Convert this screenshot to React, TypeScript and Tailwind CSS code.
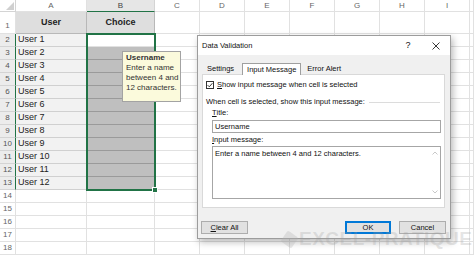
const colLetters = ["A", "B", "C", "D", "E", "F", "G", "H", "I", ""];
const rowNums = Array.from({ length: 17 }, (_, i) => i + 2);

const Corner = () => (
  <div className="bg-white border-r border-b border-[#d4d4d4] relative">
    <svg className="absolute right-[1px] bottom-[1px]" width="8" height="8" viewBox="0 0 8 8">
      <polygon points="8,0 8,8 0,8" fill="#d0d0d0" />
    </svg>
  </div>
);

const App = () => {
  return (
    <div className="relative w-[474px] h-[256px] overflow-hidden bg-white font-['Liberation_Sans',Arial,sans-serif] text-[#1f1f1f]">
      {/* sheet grid */}
      <div className="grid grid-cols-[16px_71px_68px_45px_45px_45px_45px_45px_45px_45px_4px] grid-rows-[12px_22px_repeat(17,13px)] w-max">
        <Corner />
        {colLetters.map((c, i) => (
          <div
            key={`col${i}`}
            className={
              c === "B"
                ? "bg-[#e6e6e6] border-r border-r-[#d4d4d4] border-b border-b-[#217346] flex items-center justify-center text-[8px] text-[#444]"
                : "bg-white border-r border-b border-[#e1e1e1] flex items-center justify-center text-[8px] text-[#666]"
            }
          >
            {c}
          </div>
        ))}

        {/* row 1 */}
        <div className="bg-white border-r border-b border-[#e1e1e1] flex items-end justify-center pb-[1px] text-[8px] text-[#666]">
          1
        </div>
        <div className="bg-[#dedede] border-r border-b border-[#b8b8b8] flex items-center justify-center text-[9px] font-bold text-[#222]">
          User
        </div>
        <div className="bg-[#dedede] border-r border-b border-[#b8b8b8] flex items-center justify-center text-[9px] font-bold text-[#222]">
          Choice
        </div>
        {colLetters.slice(2).map((c, i) => (
          <div key={`r1${i}`} className="border-r border-b border-[#e1e1e1]" />
        ))}

        {rowNums.map((n) => {
          const inData = n <= 13;
          return [
            <div
              key={`h${n}`}
              className={
                inData
                  ? "bg-[#ececec] border-b border-b-[#d4d4d4] border-r border-r-[#217346] flex items-center justify-center text-[8px] text-[#555]"
                  : "bg-white border-r border-b border-[#e1e1e1] flex items-center justify-center text-[8px] text-[#666]"
              }
            >
              {n}
            </div>,
            <div
              key={`a${n}`}
              className={
                inData
                  ? "bg-[#f2f2f2] border-r border-b border-[#d0d0d0] flex items-center pl-[2px] text-[9px] text-[#222]"
                  : "border-r border-b border-[#e1e1e1]"
              }
            >
              {inData ? `User ${n - 1}` : ""}
            </div>,
            <div
              key={`b${n}`}
              className={
                n === 2
                  ? "bg-white border-r border-b border-[#e1e1e1]"
                  : inData
                  ? "bg-[#bfbfbf] border-r border-b border-[#9a9a9a]"
                  : "border-r border-b border-[#e1e1e1]"
              }
            />,
            ...colLetters.slice(2).map((c, i) => (
              <div key={`${n}-${i}`} className="border-r border-b border-[#e1e1e1]" />
            )),
          ];
        })}
      </div>

      {/* selection outline */}
      <div className="absolute left-[86px] top-[33px] w-[70px] h-[158px] border-2 border-[#217346] pointer-events-none" />
      <div className="absolute left-[152px] top-[187px] w-[6px] h-[6px] bg-[#217346] border border-white" />

      {/* input message tooltip */}
      <div className="absolute left-[122px] top-[51px] w-[59px] h-[51px] bg-[#fbfadc] border border-[#a3a3a3] pl-[3px] pt-[1px] text-[8px] leading-[10px] text-[#333]">
        <div className="font-bold">Username</div>
        <div>Enter a name</div>
        <div>between 4 and</div>
        <div>12 characters.</div>
      </div>

      {/* dialog */}
      <div className="absolute left-[197px] top-[35px] w-[254px] h-[204px] bg-[#f0f0f0] border border-[#9c9c9c] shadow-[2px_3px_7px_rgba(0,0,0,0.28)] flex flex-col text-[7.5px] text-[#111]">
        <div className="h-[19px] bg-white flex items-center pl-[4px]">
          <span className="flex-1">Data Validation</span>
          <span className="w-[28px] text-center text-[9px]">?</span>
          <span className="w-[28px] flex justify-center">
            <svg width="8" height="8" viewBox="0 0 8 8">
              <path d="M0.5 0.5 L7.5 7.5 M7.5 0.5 L0.5 7.5" stroke="#222" strokeWidth="0.9" />
            </svg>
          </span>
        </div>

        <div className="h-[19px] flex items-end pl-[5px]">
          <div className="h-[11px] px-[4px] flex items-center">Settings</div>
          <div className="h-[12px] ml-[4px] px-[4px] flex items-center bg-white border border-[#9f9f9f] border-b-0 -mb-px relative z-10">
            Input Message
          </div>
          <div className="h-[11px] ml-[2px] px-[4px] flex items-center">Error Alert</div>
        </div>

        <div className="ml-[4px] w-[243px] h-[134px] bg-white border border-[#d9d9d9] flex flex-col">
          <div className="mt-[5px] h-[10px] pl-[3px] flex items-center">
            <div className="w-[8px] h-[8px] border border-[#333] bg-white flex items-center justify-center">
              <svg width="6" height="6" viewBox="0 0 6 6">
                <path d="M0.6 3.1 L2.3 4.8 L5.4 1.2" fill="none" stroke="#222" strokeWidth="0.9" />
              </svg>
            </div>
            <span className="ml-[3px]">
              <span className="underline">S</span>how input message when cell is selected
            </span>
          </div>
          <div className="mt-[7px] h-[10px] pl-[3px] pr-[4px] flex items-center">
            <span>When cell is selected, show this input message:</span>
            <div className="flex-1 h-px bg-[#dcdcdc] ml-[4px]" />
          </div>
          <div className="mt-[1px] h-[10px] pl-[9px] flex items-center">
            <span className="underline">T</span>itle:
          </div>
          <div className="mt-[2px] ml-[9px] w-[229px] h-[13px] border border-[#a6a6a6] flex items-center pl-[2px]">
            Username
          </div>
          <div className="mt-[2px] h-[10px] pl-[9px] flex items-center">
            <span className="underline">I</span>nput message:
          </div>
          <div className="mt-[1px] ml-[9px] w-[229px] h-[53px] border border-[#a6a6a6] flex">
            <div className="flex-1 pl-[2px] pt-[2px] leading-[10px]">
              Enter a name between 4 and 12 characters.
            </div>
            <div className="w-[10px] flex flex-col items-center justify-between py-[4px]">
              <svg width="6" height="4" viewBox="0 0 6 4">
                <path d="M0.5 3.5 L3 1 L5.5 3.5" fill="none" stroke="#c2c2c2" strokeWidth="0.9" />
              </svg>
              <svg width="6" height="4" viewBox="0 0 6 4">
                <path d="M0.5 0.5 L3 3 L5.5 0.5" fill="none" stroke="#c2c2c2" strokeWidth="0.9" />
              </svg>
            </div>
          </div>
        </div>

        <div className="mt-[13px] flex items-center pl-[3px] pr-[4px]">
          <div className="w-[47px] h-[13px] bg-[#e1e1e1] border border-[#adadad] flex items-center justify-center">
            <span>
              <span className="underline">C</span>lear All
            </span>
          </div>
          <div className="ml-auto w-[46px] h-[13px] bg-[#e1e1e1] border border-[#0078d7] shadow-[inset_0_0_0_1px_#0078d7] flex items-center justify-center">
            OK
          </div>
          <div className="ml-[8px] w-[47px] h-[13px] bg-[#e1e1e1] border border-[#adadad] flex items-center justify-center">
            Cancel
          </div>
        </div>
      </div>

      {/* watermark */}
      <div className="pointer-events-none absolute left-[283px] top-[229px] flex items-center gap-[3px]">
        <div className="w-[13px] h-[13px] bg-[#b0b0b0]/30 rotate-[35deg] rounded-[2px]" />
        <span className="text-[19px] font-bold leading-[20px] tracking-[0.5px] text-[#9a9a9a]/25">
          EXCEL-PRATIQUE
        </span>
      </div>
    </div>
  );
};

export default App;
